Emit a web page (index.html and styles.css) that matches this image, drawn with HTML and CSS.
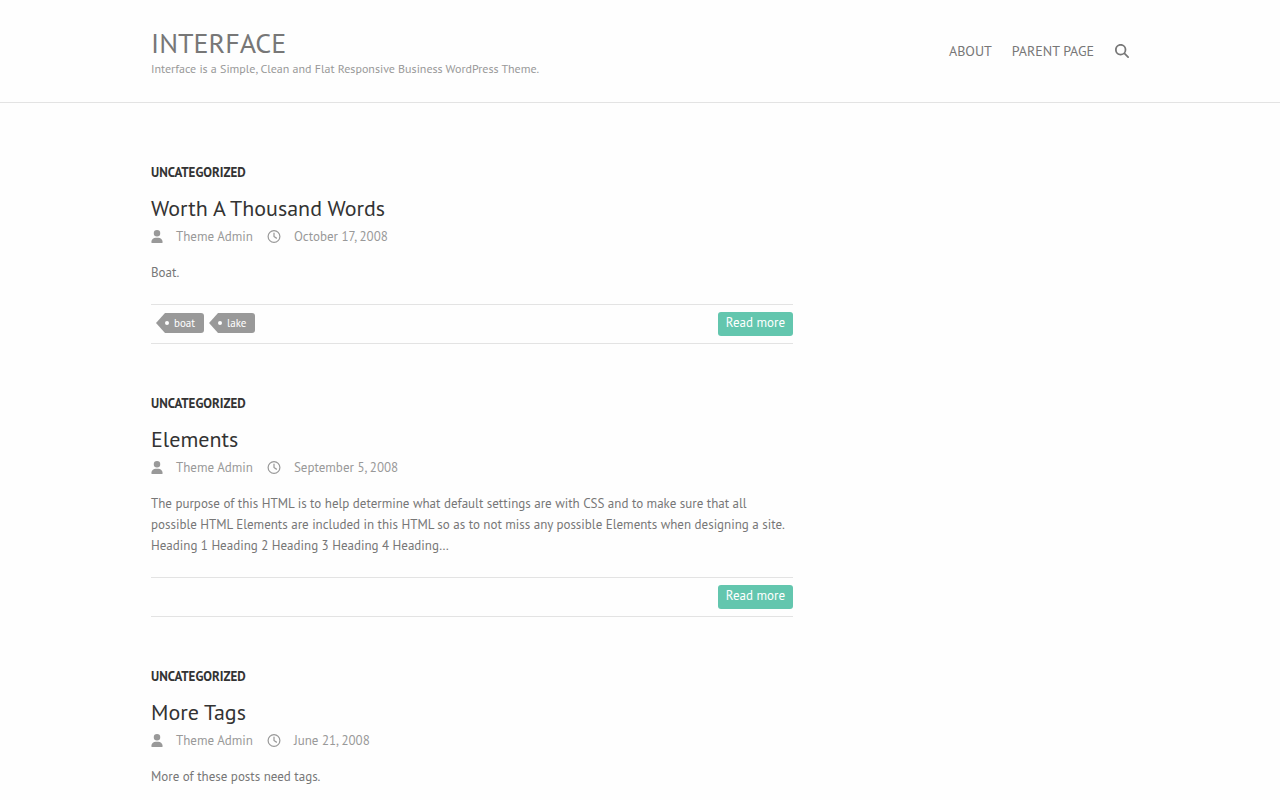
FILE: index.html
```html
<!DOCTYPE html>
<html lang="en">
<head>
    <meta charset="UTF-8">
    <meta name="viewport" content="width=device-width, initial-scale=1.0">
    <title>Interface</title>
    <link rel="stylesheet" href="styles.css">
</head>
<body>
    <!-- shared icons -->
    <svg class="sprite" aria-hidden="true">
        <symbol id="icon-user" viewBox="0 0 448 512">
            <path d="M224 256A128 128 0 1 0 224 0a128 128 0 1 0 0 256zm-45.700 48C79.800 304 0 383.800 0 482.300C0 498.700 13.300 512 29.700 512H418.300c16.400 0 29.700-13.300 29.700-29.700C448 383.800 368.200 304 269.700 304H178.300z"/>
        </symbol>
        <symbol id="icon-clock" viewBox="0 0 512 512">
            <path d="M464 256A208 208 0 1 1 48 256a208 208 0 1 1 416 0zM0 256a256 256 0 1 0 512 0A256 256 0 1 0 0 256zM232 120V256c0 8 4 15.500 10.700 20l96 64c11 7.400 25.900 4.400 33.300-6.700s4.400-25.900-6.700-33.300L280 243.200V120c0-13.300-10.700-24-24-24s-24 10.700-24 24z"/>
        </symbol>
        <symbol id="icon-search" viewBox="0 0 512 512">
            <path d="M416 208c0 45.900-14.900 88.300-40 122.700L502.600 457.400c12.500 12.500 12.500 32.800 0 45.300s-32.800 12.500-45.300 0L330.700 376c-34.400 25.200-76.800 40-122.700 40C93.100 416 0 322.900 0 208S93.100 0 208 0S416 93.100 416 208zM208 352a144 144 0 1 0 0-288 144 144 0 1 0 0 288z"/>
        </symbol>
    </svg>

    <header class="site-header">
        <div class="container header-inner">
            <div class="branding">
                <h1 class="site-title"><a href="#">INTERFACE</a></h1>
                <p class="site-description">Interface is a Simple, Clean and Flat Responsive Business WordPress Theme.</p>
            </div>
            <nav class="main-nav">
                <a href="#">ABOUT</a>
                <a href="#">PARENT PAGE</a>
                <button type="button" class="search-toggle" aria-label="Search">
                    <svg><use href="#icon-search"/></svg>
                </button>
            </nav>
        </div>
    </header>

    <main class="container">
        <div class="primary">
            <article class="post">
                <a class="category" href="#">UNCATEGORIZED</a>
                <h2 class="entry-title"><a href="#">Worth A Thousand Words</a></h2>
                <div class="entry-meta">
                    <a class="author" href="#"><svg class="icon-user"><use href="#icon-user"/></svg>Theme Admin</a>
                    <a class="date" href="#"><svg class="icon-clock"><use href="#icon-clock"/></svg>October 17, 2008</a>
                </div>
                <p class="entry-content">Boat.</p>
                <footer class="entry-footer">
                    <div class="tags">
                        <a class="tag" href="#">boat</a>
                        <a class="tag" href="#">lake</a>
                    </div>
                    <a class="readmore" href="#">Read more</a>
                </footer>
            </article>

            <article class="post">
                <a class="category" href="#">UNCATEGORIZED</a>
                <h2 class="entry-title"><a href="#">Elements</a></h2>
                <div class="entry-meta">
                    <a class="author" href="#"><svg class="icon-user"><use href="#icon-user"/></svg>Theme Admin</a>
                    <a class="date" href="#"><svg class="icon-clock"><use href="#icon-clock"/></svg>September 5, 2008</a>
                </div>
                <p class="entry-content">The purpose of this HTML is to help determine what default settings are with CSS and to make sure that all possible HTML Elements are included in this HTML so as to not miss any possible Elements when designing a site. Heading 1 Heading 2 Heading 3 Heading 4 Heading…</p>
                <footer class="entry-footer">
                    <a class="readmore" href="#">Read more</a>
                </footer>
            </article>

            <article class="post">
                <a class="category" href="#">UNCATEGORIZED</a>
                <h2 class="entry-title"><a href="#">More Tags</a></h2>
                <div class="entry-meta">
                    <a class="author" href="#"><svg class="icon-user"><use href="#icon-user"/></svg>Theme Admin</a>
                    <a class="date" href="#"><svg class="icon-clock"><use href="#icon-clock"/></svg>June 21, 2008</a>
                </div>
                <p class="entry-content">More of these posts need tags.</p>
            </article>
        </div>
    </main>
</body>
</html>
```
FILE: styles.css
```css
* {
    box-sizing: border-box;
}

body {
    margin: 0;
    font-family: "PT Sans", "Noto Sans", sans-serif;
    font-size: 13px;
    line-height: 21px;
    color: #777;
    background-color: #fefefe;
}

a {
    color: inherit;
    text-decoration: none;
}

h1, h2, p {
    margin: 0;
    font-weight: normal;
}

svg {
    fill: currentColor;
}

.sprite {
    display: none;
}

.container {
    max-width: 978px;
    margin: 0 auto;
}

/* header */
.site-header {
    border-bottom: 1px solid #e3e3e3;
}

.header-inner {
    display: flex;
    justify-content: space-between;
    align-items: center;
    padding: 26px 0 24px;
}

.site-title {
    font-size: 28px;
    line-height: 34px;
}

.site-description {
    font-size: 12px;
    line-height: 18px;
    color: #999;
}

.main-nav {
    display: flex;
    align-items: center;
    gap: 20px;
    padding-bottom: 2px;
    font-size: 14px;
}

.search-toggle {
    display: flex;
    padding: 0 0 0 1px;
    border: none;
    background: none;
    color: #777;
    cursor: pointer;
}

.search-toggle svg {
    width: 14px;
    height: 14px;
}

/* posts */
.primary {
    max-width: 642px;
    padding-top: 59px;
}

.post {
    margin-bottom: 49px;
}

.post:last-child {
    margin-bottom: 0;
}

.category {
    display: block;
    font-weight: bold;
    color: #333;
}

.entry-title {
    margin-top: 10px;
    font-size: 22px;
    line-height: 30px;
    color: #333;
}

.entry-meta {
    display: flex;
    gap: 14px;
    margin: 3px 0 15px;
    color: #999;
}

.entry-meta a {
    display: flex;
    align-items: center;
    gap: 13px;
}

.icon-user {
    width: 12px;
    height: 13px;
}

.icon-clock {
    width: 14px;
    height: 13px;
}

.entry-footer {
    display: flex;
    align-items: center;
    height: 40px;
    margin-top: 21px;
    border-top: 1px solid #e3e3e3;
    border-bottom: 1px solid #e3e3e3;
}

.tags {
    display: flex;
    gap: 5px;
    padding: 0 0 2px 5px;
}

.tag {
    display: flex;
    align-items: center;
    gap: 5px;
    height: 20px;
    padding: 0 9px;
    border-radius: 0 3px 3px 0;
    font-size: 11px;
    color: #fff;
    background-color: #999;
    clip-path: polygon(9px 0, 100% 0, 100% 100%, 9px 100%, 0 50%);
}

.tag::before {
    content: "";
    width: 4px;
    height: 4px;
    border-radius: 50%;
    background-color: #fff;
}

.readmore {
    height: 24px;
    margin-left: auto;
    padding: 0 8px;
    border-radius: 3px;
    color: #fff;
    background-color: #63c6ae;
}
```
